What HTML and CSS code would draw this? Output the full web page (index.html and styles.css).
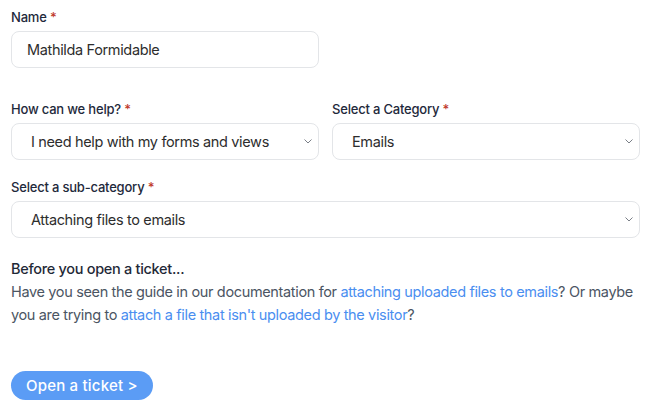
FILE: index.html
```html
<!DOCTYPE html>
<html>
<head>
<meta charset="utf-8">
<link rel="stylesheet" href="styles.css">
</head>
<body>
<form class="form">
  <div class="field field-first">
    <label class="label">Name <span class="req">*</span></label>
    <div class="control">Mathilda Formidable</div>
  </div>
  <div class="row">
    <div class="field">
      <label class="label">How can we help? <span class="req">*</span></label>
      <div class="control select"><span>I need help with my forms and views</span>
        <svg class="chev" viewBox="0 0 8 5" width="8" height="5"><path d="M0.5 0.5l3.5 3.5 3.5-3.5" fill="none" stroke="#7a7f87" stroke-width="1"/></svg>
      </div>
    </div>
    <div class="field">
      <label class="label">Select a Category <span class="req">*</span></label>
      <div class="control select"><span>Emails</span>
        <svg class="chev" viewBox="0 0 8 5" width="8" height="5"><path d="M0.5 0.5l3.5 3.5 3.5-3.5" fill="none" stroke="#7a7f87" stroke-width="1"/></svg>
      </div>
    </div>
  </div>
  <div class="field field-sub">
    <label class="label">Select a sub-category <span class="req">*</span></label>
    <div class="control select"><span>Attaching files to emails</span>
      <svg class="chev" viewBox="0 0 8 5" width="8" height="5"><path d="M0.5 0.5l3.5 3.5 3.5-3.5" fill="none" stroke="#7a7f87" stroke-width="1"/></svg>
    </div>
  </div>
  <div class="notice">
    <h4 class="notice-title">Before you open a ticket...</h4>
    <p class="notice-text">Have you seen the guide in our documentation for <a href="#">attaching uploaded files to emails</a>? Or maybe you are trying to <a href="#">attach a file that isn't uploaded by the visitor</a>?</p>
  </div>
  <button type="button" class="btn">Open a ticket &gt;</button>
</form>
</body>
</html>
```
FILE: styles.css
```css
html, body {
  margin: 0;
  padding: 0;
  background: #ffffff;
}
body {
  font-family: Inter, "Noto Sans", sans-serif;
  color: #1f2937;
}
.form {
  width: 629px;
  padding: 0 10px 0 11px;
  display: flex;
  flex-direction: column;
}
.field {
  display: flex;
  flex-direction: column;
}
.field-first {
  padding-top: 9px;
}
.row {
  display: grid;
  grid-template-columns: 308px 308px;
  column-gap: 13px;
  margin-top: 33px;
}
.field-sub {
  margin-top: 19px;
}
.label {
  font-size: 13px;
  line-height: 16px;
  font-weight: 500;
  letter-spacing: -0.2px;
  color: #1e293b;
  margin-bottom: 6px;
}
.req {
  color: #c0392b;
}
.control {
  box-sizing: border-box;
  height: 37px;
  border: 1px solid #e3e5e8;
  border-radius: 8px;
  padding: 0 15px;
  display: flex;
  align-items: center;
  font-size: 14.5px;
  letter-spacing: -0.35px;
  color: #2d2d2d;
  background: #fff;
}
.field-first .control {
  width: 308px;
}
.select {
  padding: 0 6px 0 19px;
  justify-content: space-between;
}
.chev {
  flex: none;
}
.notice {
  margin-top: 19px;
}
.notice-title {
  margin: 0;
  font-size: 14.5px;
  line-height: 23px;
  font-weight: 500;
  letter-spacing: -0.3px;
  color: #1f2937;
}
.notice-text {
  margin: 0;
  font-size: 14.5px;
  line-height: 23px;
  letter-spacing: -0.35px;
  color: #4b5563;
}
.notice-text a {
  color: #4a8ef0;
  text-decoration: none;
}
.btn {
  align-self: flex-start;
  margin-top: 45px;
  height: 29px;
  padding: 0 15px;
  border: none;
  border-radius: 15px;
  background: #5b9cf5;
  color: #ffffff;
  font-family: Inter, "Noto Sans", sans-serif;
  font-size: 15px;
  font-weight: 500;
  letter-spacing: 0.2px;
}
```
